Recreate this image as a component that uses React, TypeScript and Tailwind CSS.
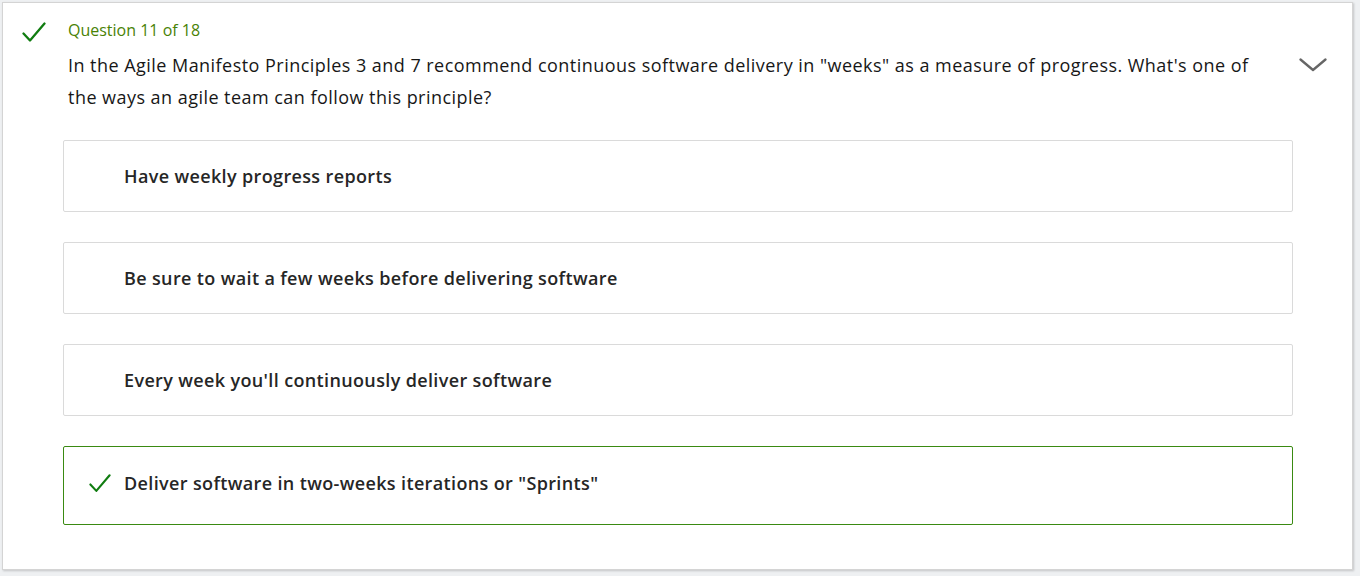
const font = { fontFamily: '"Open Sans", "Noto Sans", sans-serif' };

function CheckIcon({ className }: { className?: string }) {
  return (
    <svg viewBox="0 0 24 24" className={className} fill="none" aria-hidden="true">
      <path d="M1.5 12.5 L8 19.5 L22.5 2.5" stroke="currentColor" strokeWidth="2.3" strokeLinecap="round" strokeLinejoin="round" />
    </svg>
  );
}

const options = [
  { text: "Have weekly progress reports", correct: false },
  { text: "Be sure to wait a few weeks before delivering software", correct: false },
  { text: "Every week you'll continuously deliver software", correct: false },
  { text: 'Deliver software in two-weeks iterations or "Sprints"', correct: true },
];

export default function App() {
  return (
    <div className="h-[576px] w-[1360px] overflow-hidden bg-[#eef0f2] pl-[2px] pt-[2px]" style={font}>
      <div className="flex h-[568px] w-[1351px] border border-[#d4d4d4] bg-white shadow-[1px_1px_2px_rgba(0,0,0,0.18)]">
        <div className="w-[60px] shrink-0 pl-[19px] pt-[18px]">
          <CheckIcon className="h-[24px] w-[24px] text-[#107c10]" />
        </div>

        <div className="w-[1230px] shrink-0 pt-[15px]">
          <div className="pl-[5px] text-[16px] leading-[24px] text-[#498205]">Question 11 of 18</div>
          <p className="mt-[7px] w-[1210px] pl-[5px] text-[18px] leading-[32px] tracking-[0.46px] text-[#171717]">
            In the Agile Manifesto Principles 3 and 7 recommend continuous software delivery in "weeks" as a measure of progress. What's one of the ways an agile team can follow this principle?
          </p>

          <div className="mt-[27px] flex flex-col gap-[30px]">
            {options.map((o) =>
              o.correct ? (
                <div key={o.text} className="flex h-[79px] items-center rounded-[2px] border border-[#3a8a12] pb-[4px]">
                  <div className="flex w-[60px] shrink-0 justify-end pr-[13px]">
                    <CheckIcon className="h-[22px] w-[22px] text-[#107c10]" />
                  </div>
                  <span className="text-[18px] font-semibold tracking-[0.36px] text-[#262626]">{o.text}</span>
                </div>
              ) : (
                <div key={o.text} className="flex h-[72px] items-center rounded-[2px] border border-[#dadada] pl-[60px] pt-[1px]">
                  <span className="text-[18px] font-semibold tracking-[0.36px] text-[#262626]">{o.text}</span>
                </div>
              )
            )}
          </div>
        </div>

        <div className="flex-1 pl-[6px] pt-[55px]">
          <svg viewBox="0 0 28 14" className="h-[14px] w-[28px]" fill="none" aria-hidden="true">
            <path d="M1.5 1.5 L14 12 L26.5 1.5" stroke="#666666" strokeWidth="2.3" strokeLinecap="round" strokeLinejoin="round" />
          </svg>
        </div>
      </div>
    </div>
  );
}
